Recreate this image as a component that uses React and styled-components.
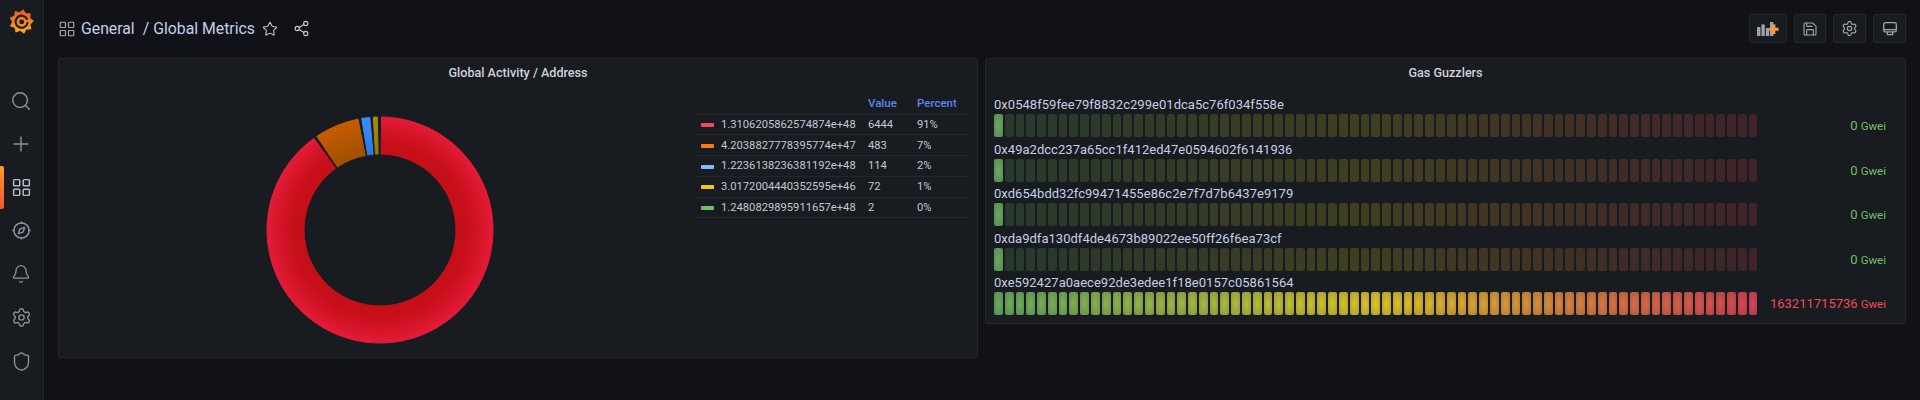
import styled, { createGlobalStyle } from 'styled-components'
import { Search, Plus, LayoutGrid, Bell, Settings, Shield, Star, Share2, Save } from 'lucide-react'

const addresses = [
    { label: '0x0548f59fee79f8832c299e01dca5c76f034f558e', value: '0', lit: 1 },
    { label: '0x49a2dcc237a65cc1f412ed47e0594602f6141936', value: '0', lit: 1 },
    { label: '0xd654bdd32fc99471455e86c2e7f7d7b6437e9179', value: '0', lit: 1 },
    { label: '0xda9dfa130df4de4673b89022ee50ff26f6ea73cf', value: '0', lit: 1 },
    { label: '0xe592427a0aece92de3edee1f18e0157c05861564', value: '163211715736', lit: 71 },
]
const legend = [
    { name: '1.3106205862574874e+48', value: '6444', percent: '91%', color: '#f2495c' },
    { name: '4.2038827778395774e+47', value: '483', percent: '7%', color: '#ff780a' },
    { name: '1.2236138236381192e+48', value: '114', percent: '2%', color: '#8ab8ff' },
    { name: '3.0172004440352595e+46', value: '72', percent: '1%', color: '#f2cc0c' },
    { name: '1.2480829895911657e+48', value: '2', percent: '0%', color: '#73bf69' },
]
const slices = [
    { from: 0.8, to: 324.2, fill: 'url(#pieRed)' },
    { from: 326, to: 348.8, fill: 'url(#pieOrange)' },
    { from: 350.7, to: 354.8, fill: 'url(#pieBlue)' },
    { from: 356.6, to: 358.6, fill: 'url(#pieYellow)' },
]
const CELLS = 71
const stops = [[115, 191, 105], [250, 222, 42], [242, 73, 92]]

function cor(i) {
    const t = i / (CELLS - 1) * 2
    const k = Math.min(Math.floor(t), 1)
    const f = t - k
    return stops[k].map((c, n) => Math.round(c + (stops[k + 1][n] - c) * f))
}
function ponto(r, ang, c = 115) {
    const a = (ang - 90) * Math.PI / 180
    return `${(c + r * Math.cos(a)).toFixed(2)} ${(c + r * Math.sin(a)).toFixed(2)}`
}
function arco(from, to) {
    const big = to - from > 180 ? 1 : 0
    return `M${ponto(113, from)}A113 113 0 ${big} 1 ${ponto(113, to)}L${ponto(76, to)}A76 76 0 ${big} 0 ${ponto(76, from)}Z`
}

function Logo() {
    const spikes = []
    for (let k = 0; k < 18; k++) {
        spikes.push(ponto(k % 2 ? 9 : 12, k * 20 + 8, 12))
    }
    return (
        <svg width="25" height="25" viewBox="0 0 24 24">
            <defs>
                <linearGradient id="logoFlame" x1="0" y1="0" x2="0" y2="1">
                    <stop offset="0" stopColor="#e6522c" />
                    <stop offset="1" stopColor="#fcb316" />
                </linearGradient>
            </defs>
            <polygon points={spikes.join(' ')} fill="url(#logoFlame)" />
            <path d="M17.2 9.4A5.8 5.8 0 1 0 17.8 13.4" fill="none" stroke="#1c1a18" strokeWidth="2" strokeLinecap="round" />
            <circle cx="12.2" cy="12.4" r="2.3" fill="#1c1a18" />
        </svg>
    )
}

function CompassIcon() {
    return (
        <svg width="19" height="19" viewBox="0 0 19 19" fill="none" stroke="currentColor" strokeWidth="1.5">
            <circle cx="9.5" cy="9.5" r="7.6" />
            <path d="M9.5 .4v2.4M9.5 16.2v2.4M.4 9.5h2.4M16.2 9.5h2.4" />
            <path d="M12.6 6.4l-1.5 4.7-4.7 1.5 1.5-4.7z" strokeLinejoin="round" />
        </svg>
    )
}

function AddPanelIcon() {
    return (
        <svg width="22" height="14" viewBox="0 0 22 14">
            <rect x="0" y="5" width="3.4" height="9" fill="#9fa1ab" />
            <rect x="4.4" y="2.4" width="3.4" height="11.6" fill="#9fa1ab" />
            <rect x="8.8" y="6" width="3.4" height="8" fill="#9fa1ab" />
            <rect x="13" y="0" width="3.4" height="14" fill="#9fa1ab" />
            <path d="M15.4 2.6h3v3.2h3.2v3h-3.2V12h-3V8.8h-3.2v-3h3.2z" fill="#ff9d2e" />
        </svg>
    )
}

function TvIcon() {
    return (
        <svg width="14" height="14" viewBox="0 0 14 14" fill="none" stroke="currentColor" strokeWidth="1.3">
            <rect x=".7" y=".7" width="12.6" height="9.2" rx="1.6" />
            <path d="M.7 7.6h12.6M4.4 9.9v2.8h5.2V9.9" />
        </svg>
    )
}

export default function App() {
    return (
        <Tudo>
            <Global />
            <Sidebar>
                <LogoBox><Logo /></LogoBox>
                <NavList>
                    <NavItem><Search size={22} strokeWidth={1.6} /></NavItem>
                    <NavItem><Plus size={24} strokeWidth={1.4} /></NavItem>
                    <NavItem $active><LayoutGrid size={21} strokeWidth={1.7} /></NavItem>
                    <NavItem><CompassIcon /></NavItem>
                    <NavItem><Bell size={20} strokeWidth={1.6} /></NavItem>
                    <NavItem><Settings size={21} strokeWidth={1.6} /></NavItem>
                    <NavItem><Shield size={21} strokeWidth={1.6} /></NavItem>
                </NavList>
            </Sidebar>
            <Main>
                <TopBar>
                    <Crumbs>
                        <LayoutGrid size={18} color="#a5a7b0" strokeWidth={1.6} />
                        <h1>General</h1>
                        <h1>/ Global Metrics</h1>
                        <CrumbAction $gap={7}><Star size={16} strokeWidth={1.6} /></CrumbAction>
                        <CrumbAction $gap={15}><Share2 size={17} strokeWidth={1.6} /></CrumbAction>
                    </Crumbs>
                    <Actions>
                        <ToolButton $w={38}><AddPanelIcon /></ToolButton>
                        <ToolButton $w={32}><Save size={16} strokeWidth={1.7} /></ToolButton>
                        <ToolButton $w={33}><Settings size={17} strokeWidth={1.7} /></ToolButton>
                        <ToolButton $w={33}><TvIcon /></ToolButton>
                    </Actions>
                </TopBar>
                <Panels>
                    <Panel $h={300}>
                        <PanelTitle>Global Activity / Address</PanelTitle>
                        <PieBody>
                            <PieArea>
                                <svg width="230" height="230" viewBox="0 0 230 230">
                                    <defs>
                                        <radialGradient id="pieRed" gradientUnits="userSpaceOnUse" cx="115" cy="115" r="113">
                                            <stop offset="0.68" stopColor="#c40f18" />
                                            <stop offset="0.78" stopColor="#c80f1b" />
                                            <stop offset="1" stopColor="#e31b37" />
                                        </radialGradient>
                                        <radialGradient id="pieOrange" gradientUnits="userSpaceOnUse" cx="115" cy="115" r="113">
                                            <stop offset="0.68" stopColor="#a05000" />
                                            <stop offset="1" stopColor="#c85c00" />
                                        </radialGradient>
                                        <radialGradient id="pieBlue" gradientUnits="userSpaceOnUse" cx="115" cy="115" r="113">
                                            <stop offset="0.68" stopColor="#2b7ae8" />
                                            <stop offset="1" stopColor="#3a8cff" />
                                        </radialGradient>
                                        <radialGradient id="pieYellow" gradientUnits="userSpaceOnUse" cx="115" cy="115" r="113">
                                            <stop offset="0.68" stopColor="#8f7c06" />
                                            <stop offset="1" stopColor="#a68f06" />
                                        </radialGradient>
                                    </defs>
                                    {slices.map(s => <path key={s.from} d={arco(s.from, s.to)} fill={s.fill} stroke={s.fill} strokeWidth="1" strokeLinejoin="round" />)}
                                </svg>
                            </PieArea>
                            <Legend>
                                <thead>
                                    <tr><th /><th>Value</th><th>Percent</th></tr>
                                </thead>
                                <tbody>
                                    {legend.map(l => (
                                        <tr key={l.name}>
                                            <td><Swatch $c={l.color} />{l.name}</td>
                                            <td>{l.value}</td>
                                            <td>{l.percent}</td>
                                        </tr>
                                    ))}
                                </tbody>
                            </Legend>
                        </PieBody>
                    </Panel>
                    <Panel $h={266}>
                        <PanelTitle>Gas Guzzlers</PanelTitle>
                        <Gauges>
                            {addresses.map(a => (
                                <Gauge key={a.label}>
                                    <GaugeLabel>{a.label}</GaugeLabel>
                                    <GaugeRow>
                                        <Cells>
                                            {Array.from({ length: CELLS }, (_, i) => <Cell key={i} $rgb={cor(i).join(',')} $on={i < a.lit} />)}
                                        </Cells>
                                        <GaugeValue $c={a.lit > 1 ? '#f2495c' : '#73bf69'}>{a.value}<small>Gwei</small></GaugeValue>
                                    </GaugeRow>
                                </Gauge>
                            ))}
                        </Gauges>
                    </Panel>
                </Panels>
            </Main>
        </Tudo>
    )
}

const Global = createGlobalStyle`
html,body{margin:0;padding:0;background:#111217;}
body{font-family:Roboto,"Liberation Sans",sans-serif;color:#ccccdc;}
*{box-sizing:border-box;}
`
const Tudo = styled.div`
display:flex;
width:1920px;
height:400px;
overflow:hidden;
background:#111217;
`
const Sidebar = styled.nav`
width:44px;
flex-shrink:0;
background:#181b1f;
border-right:1px solid #22252b;
display:flex;
flex-direction:column;
`
const LogoBox = styled.div`
height:79px;
padding-top:9px;
display:flex;
justify-content:center;
align-items:flex-start;
`
const NavList = styled.div`
display:flex;
flex-direction:column;
`
const NavItem = styled.div`
position:relative;
height:43.4px;
display:flex;
align-items:center;
justify-content:center;
padding-right:1px;
color:#8e9099;
${props => props.$active && `
&::before{
content:'';
position:absolute;
left:0;top:0;bottom:0;
width:4px;
border-radius:0 2px 2px 0;
background:linear-gradient(#ff9830,#f0582f);
}
color:#b9bbc4;
`}
`
const Main = styled.main`
flex:1;
min-width:0;
display:flex;
flex-direction:column;
padding:0 14px 0 14px;
`
const TopBar = styled.header`
height:58px;
padding-bottom:1px;
display:flex;
justify-content:space-between;
align-items:center;
`
const Crumbs = styled.div`
display:flex;
align-items:center;
h1{font-size:15.8px;font-weight:400;margin:0;color:#c3d0ea;line-height:20px;}
h1:first-of-type{margin:0 8px 0 5px;}
`
const CrumbAction = styled.span`
display:flex;
margin-left:${props => props.$gap}px;
color:#c6c8d2;
`
const Actions = styled.div`
display:flex;
gap:7px;
`
const ToolButton = styled.div`
width:${props => props.$w}px;
height:29px;
display:flex;
align-items:center;
justify-content:center;
background:#181b1f;
border:1px solid #24272d;
border-radius:2px;
color:#a0a2ac;
`
const Panels = styled.div`
display:grid;
grid-template-columns:920px 921px;
gap:7px;
align-items:start;
`
const Panel = styled.section`
height:${props => props.$h}px;
background:#181b1f;
border:1px solid #23262c;
border-radius:2px;
display:flex;
flex-direction:column;
`
const PanelTitle = styled.h2`
margin:0;
height:27px;
font-size:12.6px;
font-weight:500;
line-height:27px;
text-align:center;
color:#d0d1de;
`
const PieBody = styled.div`
flex:1;
display:flex;
align-items:flex-start;
justify-content:space-between;
padding:7px 7px 0 0;
`
const PieArea = styled.div`
flex:1;
display:flex;
justify-content:center;
padding-left:7px;
margin-top:22px;
`
const Legend = styled.table`
width:276px;
flex-shrink:0;
border-collapse:collapse;
table-layout:fixed;
font-size:11.2px;
color:#c3c8d6;
th{height:21px;padding:0;text-align:left;font-size:11.5px;font-weight:500;color:#5b84ef;}
th:nth-child(1),td:nth-child(1){width:174px;padding-left:7px;}
th:nth-child(2),td:nth-child(2){width:49px;}
td{height:20.8px;padding:0;border-top:1px solid #23262c;white-space:nowrap;}
tbody tr:last-child{border-bottom:1px solid #23262c;}
`
const Swatch = styled.i`
display:inline-block;
width:13px;
height:4px;
margin-right:7px;
vertical-align:middle;
border-radius:1px;
background:${props => props.$c};
`
const Gauges = styled.div`
display:flex;
flex-direction:column;
padding:9px 8px 0 8px;
`
const Gauge = styled.div`
height:44.6px;
display:flex;
flex-direction:column;
`
const GaugeLabel = styled.div`
height:19px;
font-size:13px;
letter-spacing:.03px;
line-height:19px;
color:#c6d0e4;
`
const GaugeRow = styled.div`
display:flex;
align-items:center;
`
const Cells = styled.div`
width:764px;
height:23px;
flex-shrink:0;
display:flex;
gap:2px;
`
const Cell = styled.div`
flex:1;
border-radius:2px;
background:${props => props.$on
        ? `radial-gradient(rgba(${props.$rgb},.86) 10%,rgba(${props.$rgb},.68) 100%)`
        : `rgba(${props.$rgb},.18)`};
`
const GaugeValue = styled.div`
flex:1;
padding-right:11px;
text-align:right;
font-size:13px;
color:${props => props.$c};
small{font-size:11.5px;margin-left:3px;}
`
